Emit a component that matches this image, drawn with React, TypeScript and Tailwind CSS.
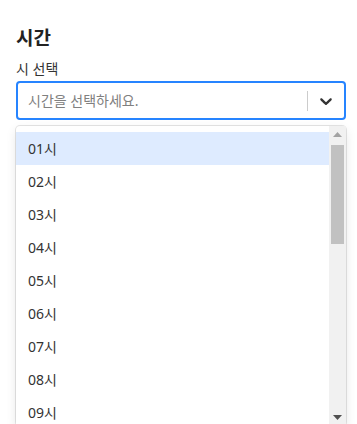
import { useState } from 'react';

const hours = Array.from({ length: 24 }, (_, i) => `${String(i + 1).padStart(2, '0')}시`);

export default function App() {
  const [active, setActive] = useState(0);

  return (
    <div
      className="w-[346px] pl-4 pt-6 text-[#333333]"
      style={{ fontFamily: '"Noto Sans", "Noto Sans CJK KR", sans-serif' }}
    >
      <h2 className="text-[19px] font-bold leading-[28px] text-[#222222]">시간</h2>
      <label className="mt-[7px] block text-[14px] leading-[20px] text-[#333333]">시 선택</label>

      <div className="mt-[2px] flex h-[39px] items-center rounded-[4px] border-2 border-[#2684FF] bg-white">
        <div className="flex-1 pl-[10px] text-[14px] text-[#808080]">시간을 선택하세요.</div>
        <span className="h-[20px] w-px bg-[#cccccc]" />
        <div className="px-2 text-[#333333]">
          <svg width="20" height="20" viewBox="0 0 20 20" fill="currentColor">
            <path d="M4.516 7.548c0.436-0.446 1.043-0.481 1.576 0l3.908 3.747 3.908-3.747c0.533-0.481 1.141-0.446 1.574 0 0.436 0.445 0.408 1.197 0 1.615-0.406 0.418-4.695 4.502-4.695 4.502-0.217 0.223-0.502 0.335-0.787 0.335s-0.57-0.112-0.789-0.335c0 0-4.287-4.084-4.695-4.502s-0.436-1.17 0-1.615z" />
          </svg>
        </div>
      </div>

      <div className="mt-[6px] flex h-[300px] rounded-[4px] bg-white shadow-[0_0_0_1px_rgba(0,0,0,0.1),0_4px_11px_rgba(0,0,0,0.1)]">
        <div className="flex-1 overflow-hidden pt-[6px]">
          {hours.map((h, i) => (
            <div
              key={h}
              onMouseEnter={() => setActive(i)}
              className={`flex h-[33px] items-center px-3 text-[14px] ${i === active ? 'bg-[#DEEBFF]' : 'bg-white'}`}
            >
              {h}
            </div>
          ))}
        </div>

        {/* scrollbar */}
        <div className="flex w-[17px] flex-col bg-[#f1f1f1]">
          <div className="flex h-[17px] items-center justify-center">
            <svg width="9" height="5" viewBox="0 0 9 5">
              <path d="M0 5 L4.5 0 L9 5 Z" fill="#a3a3a3" />
            </svg>
          </div>
          <div className="mx-[2px] mt-[2px] h-[99px] bg-[#c1c1c1]" />
          <div className="flex-1" />
          <div className="flex h-[17px] items-center justify-center">
            <svg width="9" height="5" viewBox="0 0 9 5">
              <path d="M0 0 L9 0 L4.5 5 Z" fill="#505050" />
            </svg>
          </div>
        </div>
      </div>
    </div>
  );
}
